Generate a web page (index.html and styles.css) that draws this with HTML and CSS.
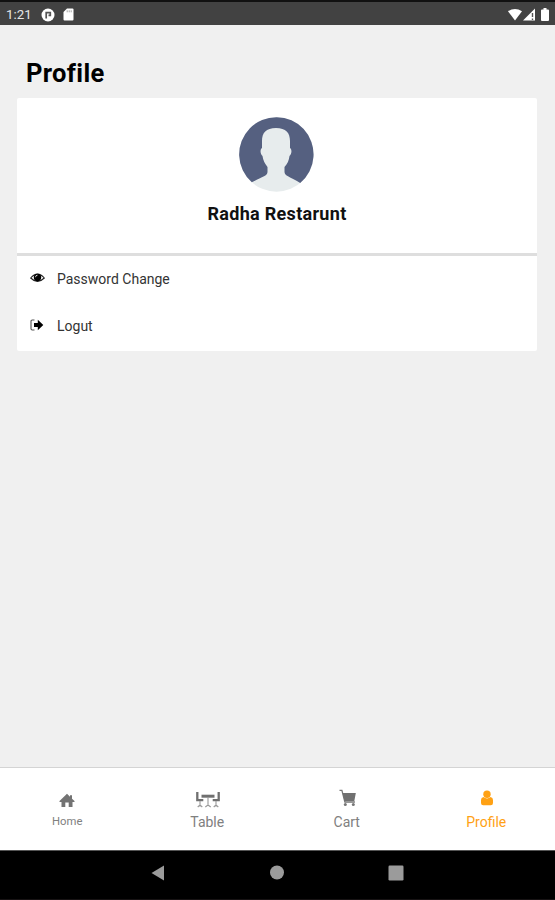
FILE: index.html
```html
<!DOCTYPE html>
<html lang="en">
<head>
<meta charset="utf-8">
<title>Profile</title>
<link rel="stylesheet" href="styles.css">
</head>
<body>
<div class="screen">
  <header class="status">
    <span class="time">1:21</span>
    <svg class="status-app" width="14" height="14" viewBox="0 0 14 14"><circle cx="7" cy="7" r="6.500" fill="#fff"/><path d="M5.200 10.500V4.700H9.300V7.300H7.500" fill="none" stroke="#555" stroke-width="1.700"/></svg>
    <svg class="status-card" width="11" height="13" viewBox="0 0 11 13"><path d="M4 .5h5.500a1 1 0 0 1 1 1v10a1 1 0 0 1-1 1h-8a1 1 0 0 1-1-1V4z" fill="#fff"/><path d="M4.200 2.300v2M6.200 2.300v2M8.200 2.300v2" stroke="#999" stroke-width=".9"/></svg>
    <svg class="status-right" width="42" height="14" viewBox="0 0 42 14"><path d="M0 3.300Q7-1.500 14 3.300L7 12.500z" fill="#fff"/><path d="M27 .5v12H15z" fill="#fff"/><path d="M24.500 5v4M24.500 10.500v1.500" stroke="#555" stroke-width="1.400"/><path d="M34 1.500h1.500V0h3v1.500H40a1 1 0 0 1 1 1V12a1 1 0 0 1-1 1h-6a1 1 0 0 1-1-1V2.500a1 1 0 0 1 1-1z" fill="#fff"/></svg>
  </header>
  <main class="content">
    <h1 class="title">Profile</h1>
    <section class="card">
      <div class="user">
        <svg class="avatar" width="75" height="75" viewBox="0 0 75 75">
          <circle cx="37.500" cy="37.500" r="37.200" fill="#e7eced"/>
          <path d="M12.800 65.300A37.200 37.200 0 1 1 61.200 65.900C57 63.500 52 61 49 59.300c-2-1.100-3.500-2.300-3.500-4.300v-5c3-3 4.500-7 5-11 2.500-2 2.500-7 .5-8v-7c0-8-4-13-14-13S23 16 23 24v7c-2 1-2 6 .5 8 .5 4 2.500 8 5 11v5c0 2-1.500 3.200-3.500 4.300-3 1.700-8 3.700-12.200 6z" fill="#556080"/>
        </svg>
        <h2 class="name">Radha Restarunt</h2>
      </div>
      <ul class="menu">
        <li class="item"><svg width="15" height="12" viewBox="0 0 15 12"><path d="M.7 6Q7.500-1.800 14.300 6 7.500 12.800.7 6z" fill="#fff" stroke="#222" stroke-width="1.100"/><circle cx="7.500" cy="5.500" r="3.700" fill="#000"/><path d="M5.500 5.200a2 2 0 0 1 2-2" fill="none" stroke="#fff" stroke-width=".8"/></svg><span>Password Change</span></li>
        <li class="item logout"><svg width="15" height="12" viewBox="0 0 15 12"><path d="M4.500 1H2.200Q1 1 1 2.200v7.600Q1 11 2.200 11h2.300" fill="none" stroke="#555" stroke-width="1.100"/><path d="M4 4h3.800V.8L13.300 6l-5.500 5.200V8H4z" fill="#000"/></svg><span>Logut</span></li>
      </ul>
    </section>
  </main>
  <nav class="tabs">
    <a class="tab home"><svg width="16" height="15" viewBox="0 0 16 15"><path d="M8 .8 11 3.700V2.200h2v3.500L15.500 8v1H13.500V14H9.700V9.500H6.300V14H2.500V9H.5V8z" fill="#737373"/></svg><span>Home</span></a>
    <a class="tab table"><svg width="26" height="18" viewBox="0 0 26 18"><path d="M2.300 1v8.200h6M23.700 1v8.200h-6" fill="none" stroke="#707070" stroke-width="2.300"/><path d="M6.500 5.200h13" stroke="#707070" stroke-width="3"/><path d="M5 10v5.500M21 10v5.500M13 6.500V15M2.700 16l2.300-2 2.300 2M10.300 16l2.700-2 2.700 2M18.700 16l2.300-2 2.300 2" fill="none" stroke="#999" stroke-width="1.100"/></svg><span>Table</span></a>
    <a class="tab"><svg class="cart" width="18" height="18" viewBox="0 0 18 18"><path d="M.5 1.300h2.400l3 11.700h10" fill="none" stroke="#777" stroke-width="1.300"/><path d="M3.500 4h13.300l-1.500 8H5.500z" fill="#707070"/><circle cx="6.300" cy="15.500" r="1.500" fill="#777"/><circle cx="14.300" cy="15.500" r="1.500" fill="#777"/></svg><span>Cart</span></a>
    <a class="tab active"><svg width="14" height="16" viewBox="0 0 14 16"><path d="M3.500 7Q7 9.800 10.500 7 13 7.300 13 10v3q0 2.200-2.200 2.200H3.200Q1 15.200 1 13v-3Q1 7.300 3.500 7z" fill="#ffa114"/><circle cx="7" cy="4.300" r="3.700" fill="#ffa114"/></svg><span>Profile</span></a>
  </nav>
  <footer class="system">
    <svg width="14" height="16" viewBox="0 0 14 16"><path d="M13 .5v15L.5 8z" fill="#9b9b9b"/></svg>
    <svg width="14" height="16" viewBox="0 0 14 16"><circle cx="7" cy="7.500" r="7" fill="#9b9b9b"/></svg>
    <svg width="16" height="16" viewBox="0 0 16 16"><rect x=".5" y=".5" width="15" height="15" rx="1.200" fill="#9b9b9b"/></svg>
  </footer>
</div>
</body>
</html>
```
FILE: styles.css
```css
* { box-sizing: border-box; }

body {
  margin: 0;
  font-family: Roboto, "Liberation Sans", sans-serif;
  background: #f0f0f0;
}

.screen {
  display: flex;
  flex-direction: column;
  height: 900px;
  overflow: hidden;
}

.status {
  display: flex;
  align-items: center;
  height: 25px;
  padding: 2px 5px 0 6px;
  background: #424242;
  border-top: 2px solid #111;
  color: #e6e6e6;
  flex: none;
}

.time { width: 35px; font-size: 13.3px; line-height: 16px; }
.status-card { margin-left: 8px; }
.status-right { margin-left: auto; }

.content { flex: 1; padding: 31px 18px 0 17px; }

.title {
  margin: 0 0 7px 9px;
  font-size: 25.500px;
  font-weight: 700;
  line-height: 35px;
  letter-spacing: 0.35px;
  color: #000;
}

.card { height: 253px; background: #fff; border-radius: 2px; }

.user {
  display: flex;
  flex-direction: column;
  align-items: center;
  height: 158px;
  padding-top: 19px;
  border-bottom: 3px solid #dedede;
}

.avatar { display: block; margin-right: 1px; }

.name {
  margin: 10px 0 0;
  font-size: 18px;
  font-weight: 700;
  line-height: 24px;
  letter-spacing: 0.3px;
  color: #111;
}

.menu { margin: 0; padding: 0; list-style: none; }

.item {
  display: flex;
  align-items: center;
  height: 47px;
  padding: 0 0 2px 13px;
  font-size: 14px;
  color: #333;
}

.item span { margin-left: 12px; }
.item svg { margin-bottom: 2px; }

.tabs {
  display: grid;
  grid-template-columns: repeat(4, 139.500px);
  flex: none;
  height: 83px;
  padding-top: 20px;
  background: #fff;
  border-top: 1px solid #d4d4d4;
}

.tab {
  display: grid;
  grid-template-rows: 24px 20px;
  align-content: start;
  align-items: center;
  justify-items: center;
  padding-right: 4px;
  font-size: 14px;
  line-height: 20px;
  color: #808080;
}

.home { font-size: 11.300px; padding-right: 5px; }
.table svg { margin-left: 2px; }
.cart { margin: 0 0 5px 3px; }
.active { color: #ffa114; }
.active svg { margin: 0 0 4px 1px; }

.system {
  display: flex;
  align-items: center;
  justify-content: space-between;
  flex: none;
  height: 50px;
  padding: 0 151px 4px 151px;
  background: #000;
  border-top: 1px solid #555;
  border-bottom: 1px solid #171314;
}
```
